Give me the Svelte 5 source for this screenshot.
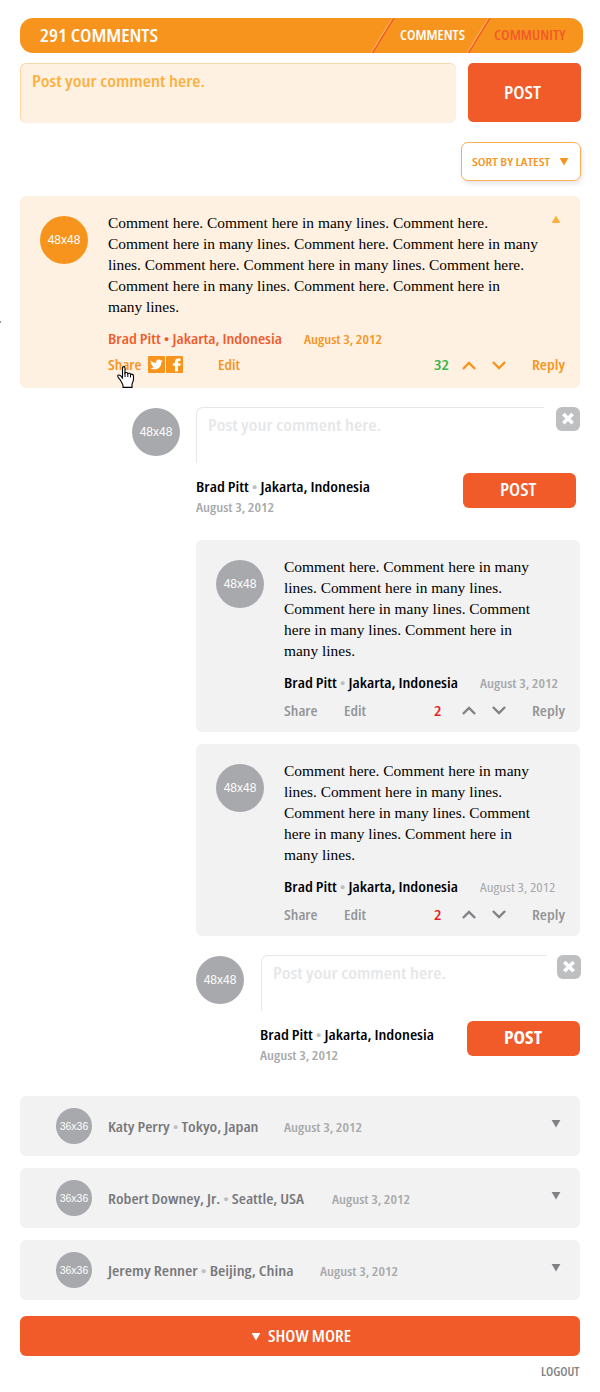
<script>
  const mainLines = [
    ['Comment here. Comment here in many lines. Comment here.', 380],
    ['Comment here in many lines. Comment here. Comment here in many', 430],
    ['lines. Comment here. Comment here in many lines. Comment here.', 416],
    ['Comment here in many lines. Comment here. Comment here in', 392],
    ['many lines.', 71]
  ];
  const replyLines = [
    ['Comment here. Comment here in many', 245],
    ['lines. Comment here in many lines.', 218],
    ['Comment here in many lines. Comment', 246],
    ['here in many lines. Comment here in', 228],
    ['many lines.', 71]
  ];
  const people = [
    { name: 'Katy Perry', place: 'Tokyo, Japan', w: 150.5, gap: 25.5 },
    { name: 'Robert Downey, Jr.', place: 'Seattle, USA', w: 196, gap: 28 },
    { name: 'Jeremy Renner', place: 'Beijing, China', w: 185.5, gap: 26.5 }
  ];
</script>

{#snippet label(text, w, size, cls)}
  <svg class="label {cls}" width={w} height="20"><text y="15" font-size={size} textLength={w} lengthAdjust="spacingAndGlyphs">{text}</text></svg>
{/snippet}

{#snippet author(name, place, w, cls)}
  <svg class="label {cls}" width={w} height="20"><text y="15" font-size="14.5" textLength={w} lengthAdjust="spacingAndGlyphs">{name} <tspan class="dot" font-size="13">•</tspan> {place}</text></svg>
{/snippet}

{#snippet lines(rows)}
  <div class="body">
    {#each rows as [text, w]}
      <svg class="line" width={w} height="21"><text y="16" textLength={w} lengthAdjust="spacingAndGlyphs">{text}</text></svg>
    {/each}
  </div>
{/snippet}

{#snippet votes(count, w, cls)}
  <div class="votes">
    {@render label(count, w, 14.5, cls)}
    <svg class="chev first" width="14" height="9" viewBox="0 0 14 9"><path d="M.9 8 7 1.900 13.100 8" /></svg>
    <svg class="chev" width="14" height="9" viewBox="0 0 14 9"><path d="M.9 1 7 7.100 13.100 1" /></svg>
    {@render label('Reply', 33, 14.5, 'reply')}
  </div>
{/snippet}

{#snippet down(cls)}
  <svg class="tri {cls}" width="8" height="7" viewBox="0 0 8 7"><path d="M-.4 0h8.800L4 7.600z" fill="currentColor" /></svg>
{/snippet}

{#snippet form(cls, postCls)}
  <section class="form {cls}">
    <div class="avatar"><span>48x48</span></div>
    <div class="editor">
      <div class="top">
        <div class="field">{@render label('Post your comment here.', 173, 15.5, 'ghost')}</div>
        <svg class="close" width="24" height="24" viewBox="0 0 24 24"><rect width="24" height="24" rx="6" fill="#bdbfc1" /><path d="M7.300 7 16.700 16.200M16.700 7 7.300 16.200" stroke="#fff" stroke-width="3.700" /></svg>
      </div>
      <div class="bottom">
        <div class="who">
          {@render author('Brad Pitt', 'Jakarta, Indonesia', 174, 'black')}
          {@render label('August 3, 2012', 78, 12, 'date')}
        </div>
        <div class="small-post">{@render label('POST', postCls === 'bold' ? 38 : 36.5, 17, postCls)}</div>
      </div>
    </div>
  </section>
{/snippet}

{#snippet card(main, dateCls, dateW)}
  <article class="card" class:main>
    <div class="avatar"><span>48x48</span></div>
    <div class="content">
      {@render lines(main ? mainLines : replyLines)}
      <div class="meta">
        {@render author('Brad Pitt', 'Jakarta, Indonesia', 174, main ? 'red' : 'black')}
        {@render label('August 3, 2012', dateW, 12, dateCls)}
      </div>
      <div class="actions">
        {@render label('Share', 33.5, 14.5, '')}
        {#if main}
          <div class="social">
            <svg width="17" height="17" viewBox="0 0 17 17"><rect width="17" height="17" rx="1" fill="#f7941e" /><path fill="#fff" d="M2.500 4.500c1.500 1.600 3.400 2.300 5.500 2.300C7.800 4.900 9 3.600 10.600 3.600c.9 0 1.600.3 2.100.9l1.600-.5-.9 1.300 1.300-.1-1.500 1.500c0 3.900-2.700 6.500-6.400 6.500-1.700 0-3.200-.5-4.300-1.300 1.500 0 2.700-.4 3.500-1-1.200-.2-1.900-.8-2.200-1.700h1C3.500 8.700 2.900 8 2.800 6.900l1 .2C2.700 6.300 2.300 5.500 2.500 4.500z" /></svg>
            <svg width="17" height="17" viewBox="0 0 17 17"><rect width="17" height="17" rx="1" fill="#f7941e" /><path fill="#fff" d="M9 15.500V9.800H6.800V7.200H9V5.700C9 3.300 10.300 2.500 12.300 2.500h2.200v2.600h-1.300c-.8 0-1.200.3-1.200 1v1.100h2.500v2.600H12v5.700z" /></svg>
          </div>
          <svg class="cursor" width="18" height="22" viewBox="0 0 18 22"><path fill="#fff" stroke="#000" stroke-width="1.100" d="M5.500 12V2C5.500.2 8 .2 8 2v5c.6-.9 2.500-.7 2.800.6.800-.7 2.400-.4 2.700.8 1-.6 3 0 3 1.600v3.600c0 2-1.500 3.400-1.500 5.200v2.600H6v-2.200C5 17.200 4.300 15.500 3.300 14 2.300 12.500 1 11.600.7 10.200.5 9 2.200 8.600 3.300 9.500z" /><path d="M8 6.500V11M10.800 8v3M13.500 9v2.500" stroke="#000" /></svg>
        {/if}
        {@render label('Edit', 22, 14.5, 'edit')}
        {@render votes(main ? '32' : '2', main ? 15 : 7.5, main ? 'green' : 'crimson')}
      </div>
    </div>
    {#if main}
      <svg class="tri toggle" width="8" height="7" viewBox="0 0 8 7"><path d="M-.4 7h8.800L4-.6z" fill="#fbb040" /></svg>
    {/if}
  </article>
{/snippet}

{#snippet slash(cls)}
  <svg class="slash {cls}" width="24" height="35" viewBox="0 0 24 35"><path d="M0 35 21.600 0" stroke="#fbb161" stroke-width="1.300" /><path d="M1.500 35 23 0" stroke="#f15a29" stroke-width="1.400" /></svg>
{/snippet}

<main>
  <header>
    {@render label('291 COMMENTS', 118, 17.5, 'title')}
    {@render slash('')}
    {@render label('COMMENTS', 65, 13.5, 'tab')}
    {@render slash('second')}
    {@render label('COMMUNITY', 71.5, 13.5, 'tab red')}
  </header>

  <div class="composer">
    <div class="box">{@render label('Post your comment here.', 173, 15.5, 'amber')}</div>
    <div class="post">{@render label('POST', 37, 17.5, '')}</div>
  </div>

  <div class="sort">
    {@render label('SORT BY LATEST', 78, 11.5, '')}
    {@render down('sort-arrow')}
  </div>

  {@render card(true, '', 78)}
  {@render form('one', '')}
  <div class="replies">
    {@render card(false, 'date', 78)}
    {@render card(false, 'date light', 75.5)}
  </div>
  {@render form('two', 'bold')}

  <div class="rows">
    {#each people as p}
      <div class="row">
        <div class="avatar small"><span>36x36</span></div>
        {@render author(p.name, p.place, p.w, 'grey')}
        <div class="when" style="margin-left: {p.gap}px">{@render label('August 3, 2012', 78, 12, 'date')}</div>
        {@render down('row-arrow')}
      </div>
    {/each}
  </div>

  <div class="more">
    {@render down('more-arrow')}
    {@render label('SHOW MORE', 83, 15.5, '')}
  </div>
  <footer>{@render label('LOGOUT', 38.5, 12, 'logout')}</footer>
  <i class="tick"></i>
</main>

<style>
  :global(body) { margin: 0; background: #fff; }
  main { position: relative; box-sizing: border-box; width: 600px; height: 1392px; padding: 18px 17px 0 20px; overflow: hidden; }
  svg { display: block; flex: none; }
  .label { overflow: visible; fill: currentColor; font-family: "Open Sans", sans-serif; font-stretch: 75%; font-weight: 540; }
  .line { overflow: visible; fill: #000; font-family: "Liberation Serif", serif; font-size: 15.5px; }
  .tri { overflow: visible; }
  .dot { fill: #bcbec0; }
  .red .dot { fill: #f15a29; }
  .red { color: #f15a29; }
  .black { color: #000; }
  .grey { color: #77787b; }
  .green { color: #39b54a; }
  .crimson { color: #ed1c24; }
  .amber { color: #fbb040; }
  .ghost { color: #e6e7e8; }
  .date { color: #a7a9ac; }
  .light { font-weight: 400; }
  .bold { font-weight: 700; }
  .logout { color: #808285; font-weight: 540; }
  .tick { position: absolute; left: 0; top: 321px; width: 1px; height: 2px; background: #939598; }

  header { display: flex; align-items: flex-start; height: 35px; margin-left: 0.400px; border-radius: 13px; background: #f7941e; color: #fff; }
  .title { margin: 9px 213px 0 19.600px; }
  .tab { margin: 7px 0 0 5px; }
  .tab.red { margin-left: 3px; color: #f15a29; }
  .slash.second { margin-left: 2px; }

  .composer { display: flex; gap: 12px; margin-top: 10px; }
  .box { box-sizing: border-box; width: 436px; height: 60px; padding: 8px 11px; border: solid #fbd7a8; border-width: 1px 0 0 1px; border-radius: 6px; background: #fef1e1; }
  .post { display: flex; justify-content: center; width: 112.500px; height: 59px; padding: 21px 4px 0 0; box-sizing: border-box; border-radius: 5px; background: #f15a29; color: #fff; }

  .sort { box-sizing: border-box; display: flex; width: 120px; height: 39px; margin: 19px 0 0 441px; padding: 8px 0 0 9.500px; border: 1.500px solid #f9b055; border-radius: 7px; box-shadow: 1px 3px 5px rgba(0, 0, 0, 0.1); color: #f7941e; }
  .sort :global(.sort-arrow) { margin: 7px 0 0 10px; }

  .card { box-sizing: border-box; display: flex; height: 192px; padding: 20px; border-radius: 6px; background: #f2f2f2; color: #939598; }
  .card.main { width: 560px; margin-top: 15px; background: #fef1e1; color: #f7941e; }
  .avatar { flex: none; display: flex; align-items: center; justify-content: center; width: 48px; height: 48px; border-radius: 50%; background: #a7a9ac; color: #fff; font: 12px/14px "Liberation Sans", sans-serif; }
  .main > .avatar { background: #f7941e; }
  .small { width: 36px; height: 36px; font-size: 10.500px; }
  .content { flex: none; width: 276px; margin-left: 20px; }
  .main .content { width: 440px; }
  .body { margin-top: -4px; }
  .meta { display: flex; gap: 22px; margin-top: 12px; }
  .actions { display: flex; width: 281px; margin-top: 8px; position: relative; }
  .main .actions { width: 457px; margin-top: 7px; }
  .main .actions > .label, .main .votes > .label { margin-top: -1px; }
  .social { display: flex; gap: 1px; margin-left: 6.500px; }
  .edit { margin-left: 26.500px; }
  .main .edit { margin-left: 35px; }
  .cursor { position: absolute; left: 9px; top: 10px; }
  .votes { display: flex; margin-left: auto; }
  .chev { margin: 5px 0 0 16px; fill: none; stroke: currentColor; stroke-width: 2.400; }
  .card:not(.main) .chev { stroke: #808285; }
  .chev.first, .card:not(.main) .chev.first { margin-left: 20.500px; }
  .main .chev.first { margin-left: 13px; }
  .reply { margin-left: 26.500px; }
  .toggle { margin-left: 4px; }

  .form { display: flex; }
  .form.one { height: 133px; margin: 19px 0 0 112px; }
  .form.two { height: 141px; margin: 19px 0 0 176px; }
  .form .avatar { margin: 1px 16px 0 0; }
  .top { display: flex; }
  .field { box-sizing: border-box; width: 348px; height: 56px; padding: 8px 0 0 11px; border: solid #e6e7e8; border-width: 1px 0 0 1px; border-radius: 7px 0 0 0; }
  .two .field { width: 285px; margin-left: 1px; }
  .close { margin-left: 12px; }
  .two .close { margin-left: 11px; }
  .bottom { display: flex; margin-top: 10px; }
  .who { width: 267px; padding-top: 4px; }
  .two .who { width: 207px; }
  .small-post { box-sizing: border-box; display: flex; justify-content: center; width: 113px; height: 35px; padding: 8px 3px 0 0; border-radius: 6px; background: #f15a29; color: #fff; }
  .two .small-post { padding-right: 1px; }
  .replies { display: grid; gap: 12px; width: 384px; margin-left: 176px; }

  .rows { display: grid; gap: 12px; width: 560px; }
  .row { box-sizing: border-box; display: flex; height: 60px; padding: 12px 20px 0 36px; border-radius: 6px; background: #f2f2f2; }
  .row > .grey { margin: 9px 0 0 16px; }
  .when { margin-top: 9px; }
  .row :global(.row-arrow) { margin: 12px 0 0 auto; color: #808285; }
  .more { box-sizing: border-box; display: flex; gap: 8px; width: 560px; height: 40px; margin-top: 16px; padding: 11px 0 0 232px; border-radius: 6px; background: #f15a29; color: #fff; }
  .more :global(.more-arrow) { margin-top: 6px; }
  footer { display: flex; justify-content: flex-end; width: 559px; margin-top: 5px; }
</style>
